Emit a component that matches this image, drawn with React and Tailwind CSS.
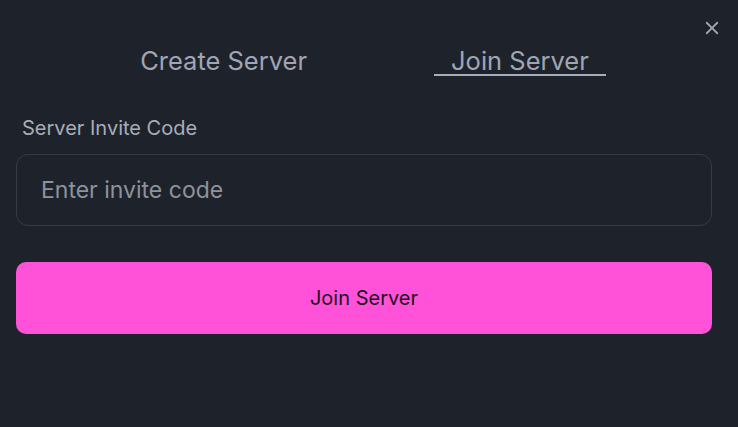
import React, { useState } from "react";
import { IoMdClose } from "react-icons/io";

const App = () => {
  const [tab, setTab] = useState("join");
  const [code, setCode] = useState("");

  return (
    <div
      className="w-[738px] h-[427px] bg-[#1e232b] relative"
      style={{ fontFamily: "Inter, 'Noto Sans', sans-serif" }}
    >
      {/* Close */}
      <button
        className="absolute right-[15px] top-[17px] text-[#a3a7b0]"
        aria-label="Close"
      >
        <IoMdClose size={22} />
      </button>

      <div className="pl-4 pr-[26px] pt-[48px]">
        {/* Tabs */}
        <div className="flex justify-center gap-[110px] pl-[1px]">
          <button
            onClick={() => setTab("create")}
            className={`px-[17px] pb-[1px] text-[25.5px] leading-[25px] text-[#a0a5b3] border-b-2 ${
              tab === "create" ? "border-[#a8adbd]" : "border-transparent"
            }`}
          >
            Create Server
          </button>
          <button
            onClick={() => setTab("join")}
            className={`px-[17px] pb-[1px] text-[25.5px] leading-[25px] text-[#a0a5b3] border-b-2 ${
              tab === "join" ? "border-[#a8adbd]" : "border-transparent"
            }`}
          >
            Join Server
          </button>
        </div>

        {/* Invite code */}
        <label className="block mt-[39px] ml-[6px] text-[20px] leading-[26px] text-[#a9adb6]">
          Server Invite Code
        </label>
        <input
          value={code}
          onChange={(e) => setCode(e.target.value)}
          placeholder="Enter invite code"
          className="mt-[13px] w-full h-[72px] rounded-xl border border-[#363b44] bg-transparent px-[24px] text-[23px] text-[#d1d5db] placeholder:text-[#8d929c] outline-none"
        />

        <button className="mt-[36px] w-full h-[72px] rounded-[10px] bg-[#ff52d9] text-[20px] text-[#1a1220]">
          Join Server
        </button>
      </div>
    </div>
  );
};

export default App;
